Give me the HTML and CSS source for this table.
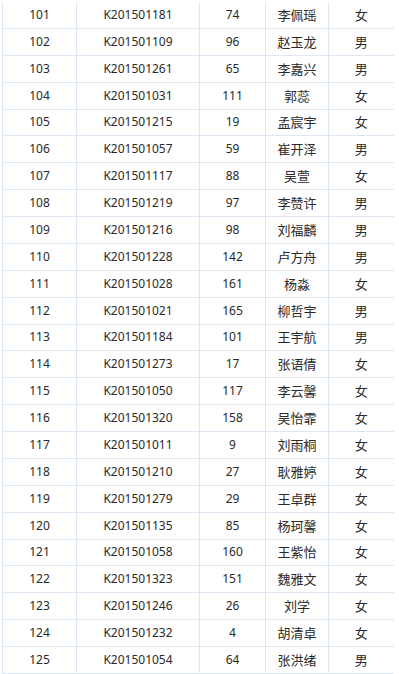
FILE: index.html
```html
<!DOCTYPE html>
<html lang="zh-CN">
<head>
<meta charset="utf-8">
<title>学生列表</title>
<link rel="stylesheet" href="styles.css">
</head>
<body>
<table class="grid">
<colgroup>
<col class="c-no"><col class="c-id"><col class="c-score"><col class="c-name"><col class="c-sex">
</colgroup>
<tbody>
<tr><td>101</td><td>K201501181</td><td>74</td><td>李佩瑶</td><td>女</td></tr>
<tr><td>102</td><td>K201501109</td><td>96</td><td>赵玉龙</td><td>男</td></tr>
<tr><td>103</td><td>K201501261</td><td>65</td><td>李嘉兴</td><td>男</td></tr>
<tr><td>104</td><td>K201501031</td><td>111</td><td>郭蕊</td><td>女</td></tr>
<tr><td>105</td><td>K201501215</td><td>19</td><td>孟宸宇</td><td>女</td></tr>
<tr><td>106</td><td>K201501057</td><td>59</td><td>崔开泽</td><td>男</td></tr>
<tr><td>107</td><td>K201501117</td><td>88</td><td>吴萱</td><td>女</td></tr>
<tr><td>108</td><td>K201501219</td><td>97</td><td>李赞许</td><td>男</td></tr>
<tr><td>109</td><td>K201501216</td><td>98</td><td>刘福麟</td><td>男</td></tr>
<tr><td>110</td><td>K201501228</td><td>142</td><td>卢方舟</td><td>男</td></tr>
<tr><td>111</td><td>K201501028</td><td>161</td><td>杨淼</td><td>女</td></tr>
<tr><td>112</td><td>K201501021</td><td>165</td><td>柳哲宇</td><td>男</td></tr>
<tr><td>113</td><td>K201501184</td><td>101</td><td>王宇航</td><td>男</td></tr>
<tr><td>114</td><td>K201501273</td><td>17</td><td>张语倩</td><td>女</td></tr>
<tr><td>115</td><td>K201501050</td><td>117</td><td>李云馨</td><td>女</td></tr>
<tr><td>116</td><td>K201501320</td><td>158</td><td>吴怡霏</td><td>女</td></tr>
<tr><td>117</td><td>K201501011</td><td>9</td><td>刘雨桐</td><td>女</td></tr>
<tr><td>118</td><td>K201501210</td><td>27</td><td>耿雅婷</td><td>女</td></tr>
<tr><td>119</td><td>K201501279</td><td>29</td><td>王卓群</td><td>女</td></tr>
<tr><td>120</td><td>K201501135</td><td>85</td><td>杨珂馨</td><td>女</td></tr>
<tr><td>121</td><td>K201501058</td><td>160</td><td>王紫怡</td><td>女</td></tr>
<tr><td>122</td><td>K201501323</td><td>151</td><td>魏雅文</td><td>女</td></tr>
<tr><td>123</td><td>K201501246</td><td>26</td><td>刘学</td><td>女</td></tr>
<tr><td>124</td><td>K201501232</td><td>4</td><td>胡清卓</td><td>女</td></tr>
<tr><td>125</td><td>K201501054</td><td>64</td><td>张洪绪</td><td>男</td></tr>
</tbody>
</table>
</body>
</html>
```
FILE: styles.css
```css
html, body {
  margin: 0;
  padding: 0;
  background: #ffffff;
}
body {
  padding: 2px 0 0 2px;
  font-family: "Noto Sans", "Noto Sans CJK SC", sans-serif;
  font-size: 12px;
  color: #2a2a2a;
}
.grid {
  border-collapse: collapse;
  table-layout: fixed;
  width: 391px;
  border-left: 1px solid #dde8f4;
}
.c-no { width: 74px; }
.c-id { width: 123px; }
.c-score { width: 66px; }
.c-name { width: 63px; }
.c-sex { width: 65px; }
.grid td {
  height: 25.875px;
  padding: 0;
  text-align: center;
  vertical-align: middle;
  border-bottom: 1px solid #dde8f4;
  border-right: 1px solid #dde8f4;
  line-height: 16px;
  white-space: nowrap;
}
.grid td:last-child {
  border-right: none;
}
.grid td:nth-child(4),
.grid td:nth-child(5) {
  font-size: 13px;
}
```
